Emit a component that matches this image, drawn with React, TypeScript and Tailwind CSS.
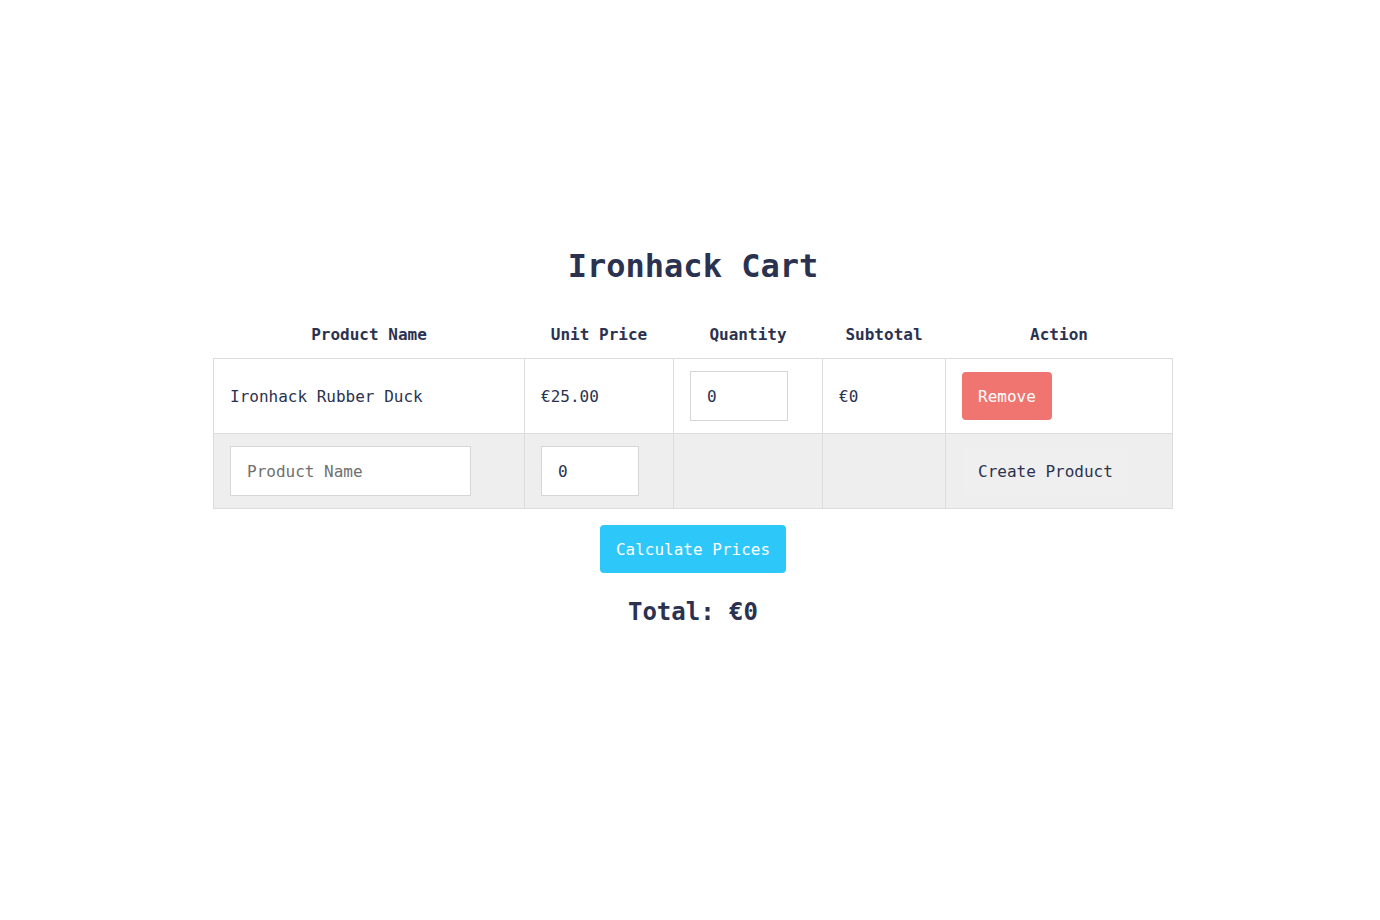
import React from "react";

export default function App() {
  const font = { fontFamily: '"DejaVu Sans Mono", "Liberation Mono", monospace' };
  return (
    <div className="w-[1380px] h-[920px] bg-white text-[#2b3250]" style={font}>
      <div className="flex flex-col items-center pt-[246px] pl-[6px]">
        <h1 className="text-[32px] leading-[40px] font-bold">Ironhack Cart</h1>
        <table className="mt-[24px] w-[959px] border-collapse text-[16px] table-fixed">
          <colgroup>
            <col className="w-[311px]" />
            <col className="w-[149px]" />
            <col className="w-[149px]" />
            <col className="w-[123px]" />
            <col className="w-[227px]" />
          </colgroup>
          <thead>
            <tr className="h-[48px]">
              <th className="font-bold text-center pt-[2px]">Product Name</th>
              <th className="font-bold text-center pt-[2px]">Unit Price</th>
              <th className="font-bold text-center pt-[2px]">Quantity</th>
              <th className="font-bold text-center pt-[2px]">Subtotal</th>
              <th className="font-bold text-center pt-[2px]">Action</th>
            </tr>
          </thead>
          <tbody>
            <tr className="h-[75px]">
              <td className="border border-[#dcdcdc] px-4 pt-[13px] pb-[11px]">Ironhack Rubber Duck</td>
              <td className="border border-[#dcdcdc] px-4 pt-[13px] pb-[11px]">€25.00</td>
              <td className="border border-[#dcdcdc] px-4 py-3">
                <input
                  type="number"
                  defaultValue={0}
                  className="w-[98px] h-[50px] border border-[#d6d6d6] px-4 pt-[2px] outline-none text-[#2b3250] [appearance:textfield]"
                  style={font}
                />
              </td>
              <td className="border border-[#dcdcdc] px-4 pt-[13px] pb-[11px]">€0</td>
              <td className="border border-[#dcdcdc] px-4 py-3">
                <button className="h-[48px] px-4 pt-[2px] rounded bg-[#f07470] text-white" style={font}>
                  Remove
                </button>
              </td>
            </tr>
            <tr className="h-[75px] bg-[#eeeeee]">
              <td className="border border-[#dcdcdc] px-4 py-3">
                <input
                  type="text"
                  placeholder="Product Name"
                  className="w-[241px] h-[50px] bg-white border border-[#d6d6d6] px-4 pt-[2px] outline-none placeholder:text-[#707070]"
                  style={font}
                />
              </td>
              <td className="border border-[#dcdcdc] px-4 py-3">
                <input
                  type="number"
                  defaultValue={0}
                  className="w-[98px] h-[50px] bg-white border border-[#d6d6d6] px-4 pt-[2px] outline-none text-[#2b3250] [appearance:textfield]"
                  style={font}
                />
              </td>
              <td className="border border-[#dcdcdc] px-4 py-3"></td>
              <td className="border border-[#dcdcdc] px-4 py-3"></td>
              <td className="border border-[#dcdcdc] px-4 py-3">
                <button className="h-[48px] px-4 pt-[2px] rounded bg-[#efefef] text-[#2b3250]" style={font}>
                  Create Product
                </button>
              </td>
            </tr>
          </tbody>
        </table>
        <button className="mt-[16px] h-[48px] px-4 pt-[2px] rounded bg-[#2ec7fa] text-white text-[16px]" style={font}>
          Calculate Prices
        </button>
        <h2 className="mt-[23px] text-[24px] leading-[32px] font-bold">Total: €0</h2>
      </div>
    </div>
  );
}
